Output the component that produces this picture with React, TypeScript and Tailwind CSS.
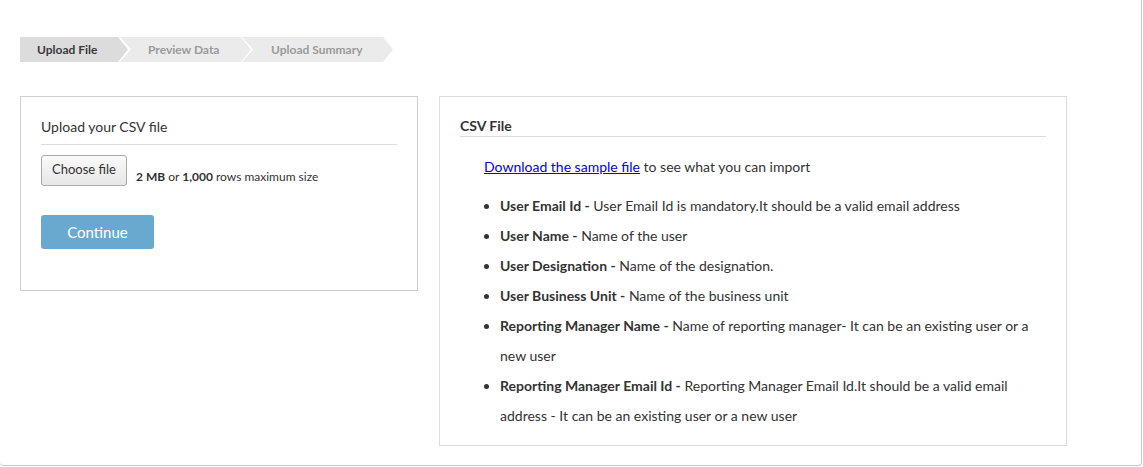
import React from "react";

const steps = [
  { label: "Upload File", active: true, cls: "w-[108px] pl-[17px]" },
  { label: "Preview Data", active: false, cls: "w-[131px] pl-[28px] -ml-[8px]" },
  { label: "Upload Summary", active: false, cls: "w-[151px] pl-[29px] -ml-[9px]" },
];

const fields = [
  { name: "User Email Id", desc: "User Email Id is mandatory.It should be a valid email address" },
  { name: "User Name", desc: "Name of the user" },
  { name: "User Designation", desc: "Name of the designation." },
  { name: "User Business Unit", desc: "Name of the business unit" },
  { name: "Reporting Manager Name", desc: "Name of reporting manager- It can be an existing user or a new user" },
  {
    name: "Reporting Manager Email Id",
    desc: "Reporting Manager Email Id.It should be a valid email address - It can be an existing user or a new user",
  },
];

export default function App() {
  return (
    <div className="w-[1143px] h-[467px] bg-white font-['Lato','Liberation_Sans',sans-serif] text-[#333]">
      <div className="w-[1142px] h-[466px] border-r border-b border-[#c9c9cc] rounded-b-[4px] pl-5 pt-[37px]">
        {/* Wizard steps */}
        <div className="flex h-[25px]">
          {steps.map((s, i) => (
            <div
              key={s.label}
              className={
                (i === 0
                  ? "[clip-path:polygon(0_0,calc(100%-10px)_0,100%_50%,calc(100%-10px)_100%,0_100%)] "
                  : "[clip-path:polygon(0_0,calc(100%-10px)_0,100%_50%,calc(100%-10px)_100%,0_100%,11px_50%)] ") +
                s.cls +
                " h-[25px] flex items-center text-[12px] font-bold " +
                (s.active ? "bg-[#dcdcdc] text-[#3a3a3a]" : "bg-[#ebebeb] text-[#9a9a9a]")
              }
            >
              {s.label}
            </div>
          ))}
        </div>

        <div className="flex items-start gap-[21px] mt-[34px]">
          {/* Upload card */}
          <div className="w-[398px] h-[195px] border border-[#cfcfcf] px-5 pt-5">
            <div className="text-[14px] leading-[20px] pb-[7px] border-b border-[#dcdcdc]">Upload your CSV file</div>
            <div className="flex mt-[10px]">
              <button className="h-[31px] w-[86px] border border-[#aaaaaa] rounded-[3px] bg-gradient-to-b from-[#fafafa] to-[#e6e6e6] text-[13px] text-[#333] pb-[2px]">
                Choose file
              </button>
              <div className="self-end mb-px ml-[9px] text-[12px] leading-[16px]">
                <b>2 MB</b> or <b>1,000</b> rows maximum size
              </div>
            </div>
            <button className="mt-[29px] w-[113px] h-[34px] rounded-[3px] bg-[#69a9d0] text-white text-[15px]">
              Continue
            </button>
          </div>

          {/* CSV info card */}
          <div className="w-[628px] h-[350px] border border-[#dcdcdc] px-5 pt-[19px]">
            <div className="text-[14px] leading-[20px] font-bold border-b border-[#dcdcdc]">CSV File</div>
            <div className="mt-5 pl-[24px] text-[14px] leading-[20px]">
              <a href="#" className="text-[#0000ee] underline">
                Download the sample file
              </a>{" "}
              to see what you can import
            </div>
            <ul className="list-disc pl-[40px] mt-[14px] text-[14px] leading-[30px]">
              {fields.map((f) => (
                <li key={f.name}>
                  <b>{f.name} -</b> {f.desc}
                </li>
              ))}
            </ul>
          </div>
        </div>
      </div>
    </div>
  );
}
